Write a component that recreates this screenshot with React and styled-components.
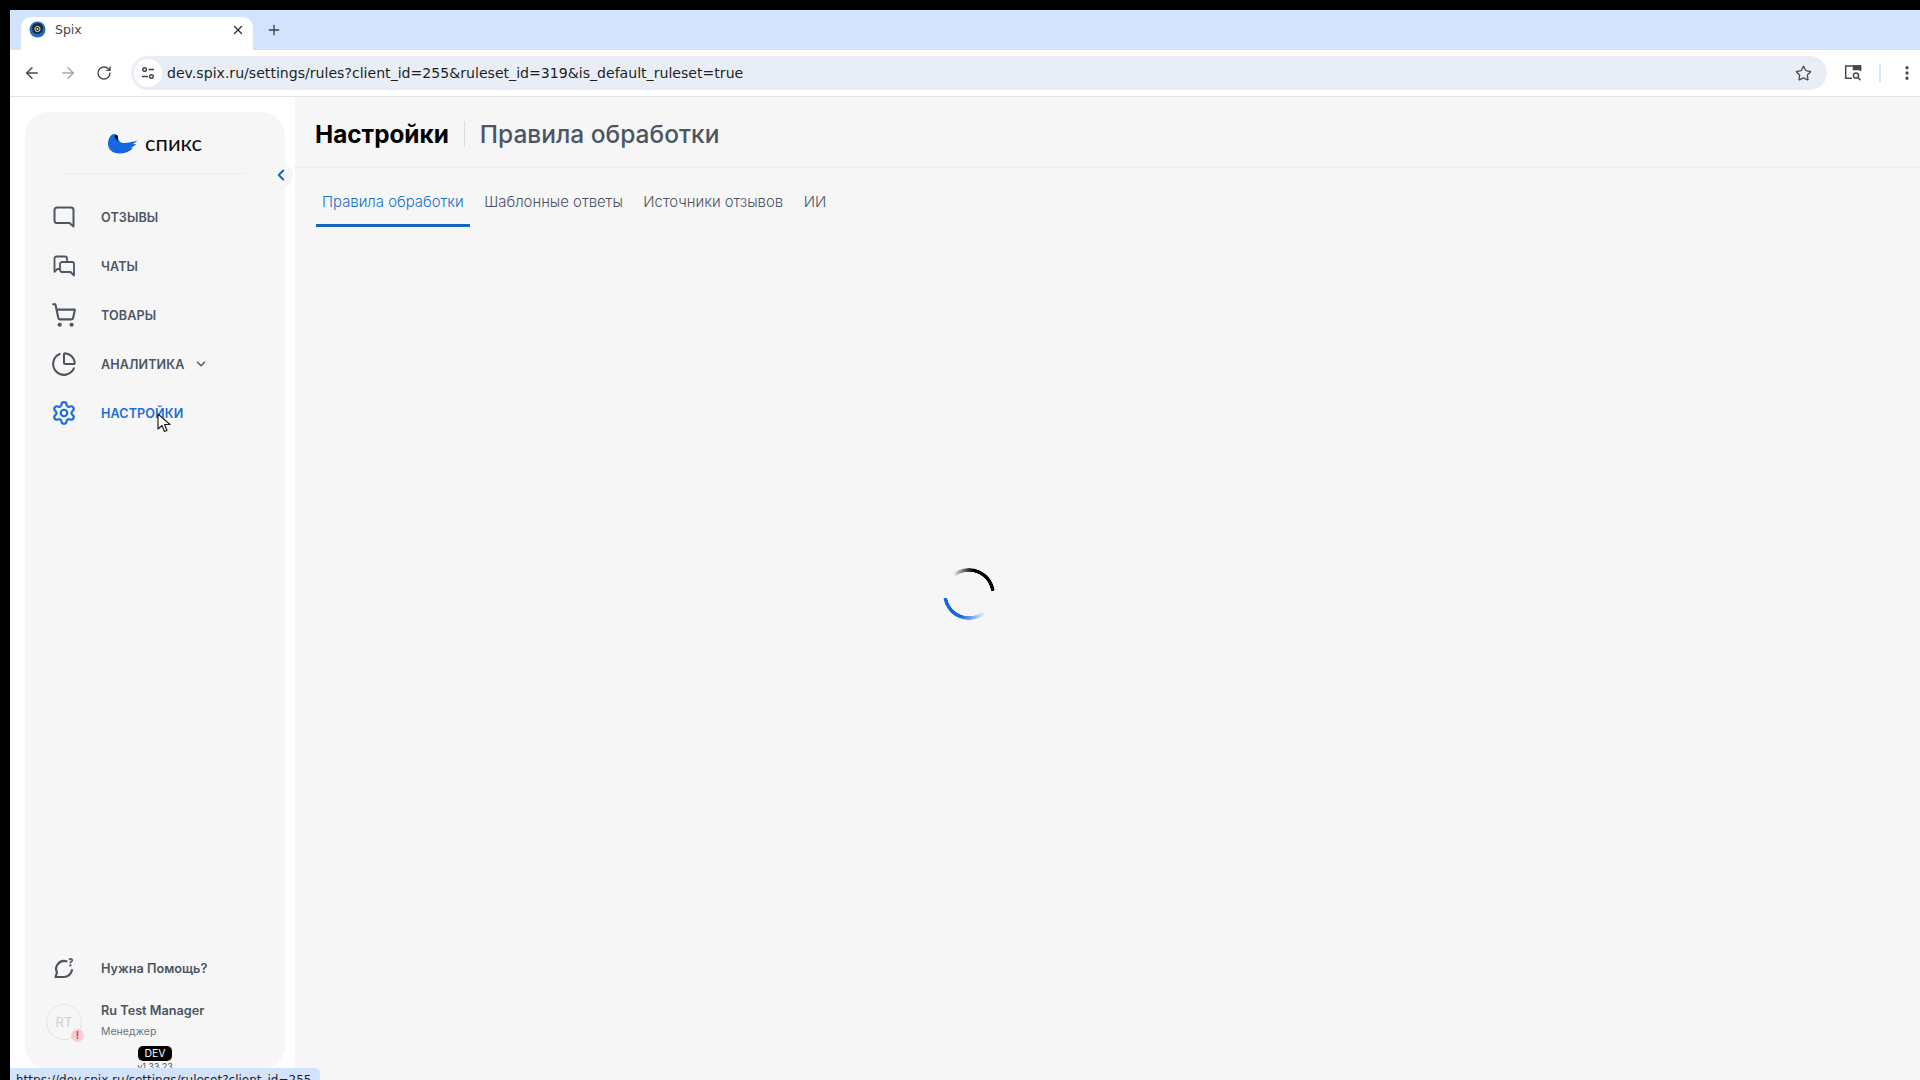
import React from 'react';
import styled, { createGlobalStyle } from 'styled-components';
import { ArrowLeft, ArrowRight, RotateCw, Star, Plus, X, ChevronLeft, ChevronDown, ShoppingCart, ChartPie, Settings, EllipsisVertical } from 'lucide-react';

const GlobalStyle = createGlobalStyle`
  html, body { margin: 0; padding: 0; height: 100%; background: #000; overflow: hidden; }
  #root { height: 100%; }
  * { box-sizing: border-box; }
`;

const Screen = styled.div`
  position: relative;
  width: 1920px;
  height: 1080px;
  padding: 10px 0 0 10px;
  background: #000;
  overflow: hidden;
  display: flex;
  flex-direction: column;
`;

const TabStrip = styled.div`
  height: 40px;
  flex: none;
  background: #d3e3fd;
  display: flex;
  align-items: flex-end;
  padding-left: 11px;
`;

const BrowserTab = styled.div`
  width: 232px;
  height: 33px;
  background: #fff;
  border-radius: 10px 10px 0 0;
  display: flex;
  align-items: center;
  padding: 0 8px 8px 8px;
  font: 12.5px "DejaVu Sans", sans-serif;
  color: #444746;
  gap: 9px;
`;

const TabTitle = styled.span`
  flex: 1;
`;

const NewTab = styled.div`
  width: 40px;
  height: 33px;
  margin-left: 1px;
  padding-bottom: 8px;
  display: flex;
  align-items: center;
  justify-content: center;
  color: #3c4043;
`;

const Toolbar = styled.div`
  height: 47px;
  flex: none;
  background: #fff;
  border-bottom: 1px solid #e1e3e6;
  display: flex;
  align-items: center;
  padding: 0 0 0 4px;
`;

const NavButton = styled.div`
  width: 36px;
  height: 30px;
  display: flex;
  align-items: center;
  justify-content: center;
  color: ${p => (p.$disabled ? '#a5a8ab' : '#474a4d')};
`;

const Omnibox = styled.div`
  flex: 1;
  height: 34px;
  margin-left: 9px;
  border-radius: 17px;
  background: #e9eef6;
  display: flex;
  align-items: center;
  padding: 0 15px 0 3px;
`;

const SiteInfo = styled.div`
  width: 28px;
  height: 28px;
  border-radius: 50%;
  background: #fff;
  display: flex;
  align-items: center;
  justify-content: center;
  margin-right: 5px;
`;

const Url = styled.div`
  flex: 1;
  font: 14.1px "DejaVu Sans", sans-serif;
  color: #1f1f1f;
  padding-bottom: 1px;
`;

const ToolIcon = styled.div`
  width: ${p => p.$w}px;
  display: flex;
  justify-content: center;
  color: #474a4d;
`;

const ToolbarSep = styled.div`
  width: 2px;
  height: 18px;
  margin-right: 13px;
  background: #d3e3fd;
`;

const Page = styled.div`
  flex: 1;
  min-height: 0;
  background: #fff;
  display: flex;
  position: relative;
`;

const Sidebar = styled.aside`
  width: 260px;
  margin: 15px 10px 11px 15px;
  background: #f6f6f7;
  border-radius: 24px;
  display: flex;
  flex-direction: column;
  position: relative;
  flex: none;
`;

const LogoRow = styled.div`
  height: 62px;
  margin: 0 40px;
  border-bottom: 1px solid #e9ebee;
  display: flex;
  align-items: flex-end;
  justify-content: center;
  padding-bottom: 19px;
  gap: 7px;
`;

const LogoText = styled.span`
  font: 400 22px/22px "Lato", sans-serif;
  color: #0b0b0b;
`;

const CollapseButton = styled.div`
  position: absolute;
  top: 51px;
  left: 244px;
  width: 24px;
  height: 24px;
  border-radius: 50%;
  background: #f6f6f7;
  display: flex;
  align-items: center;
  justify-content: center;
  color: #1565c0;
`;

const NavList = styled.nav`
  display: flex;
  flex-direction: column;
  gap: 9px;
  margin-top: 23px;
  flex: 1;
`;

const NavItem = styled.div`
  height: 40px;
  display: flex;
  align-items: center;
  padding-left: 24px;
  color: ${p => (p.$active ? '#1a6fd6' : '#4b5563')};
`;

const IconSlot = styled.div`
  width: 30px;
  height: 30px;
  display: flex;
  align-items: center;
  justify-content: center;
  margin-right: 22px;
  flex: none;
`;

const NavLabel = styled.span`
  font: 600 12.6px "Inter", sans-serif;
  letter-spacing: 0.1px;
  text-transform: uppercase;
`;

const NavChevron = styled(ChevronDown)`
  margin-left: 9px;
`;

const HelpRow = styled.div`
  display: flex;
  align-items: center;
  padding-left: 24px;
  height: 30px;
  color: #4b5563;
`;

const HelpLabel = styled.span`
  font: 600 12.7px "Inter", sans-serif;
`;

const UserRow = styled.div`
  display: flex;
  align-items: flex-start;
  padding-left: 21px;
  margin-top: 20px;
  height: 43px;
`;

const Avatar = styled.div`
  position: relative;
  width: 36px;
  height: 36px;
  border: 1px solid #e2e3e5;
  border-radius: 50%;
  margin: 1px 19px 0 0;
  display: flex;
  align-items: center;
  justify-content: center;
  font: 400 13px "Inter", sans-serif;
  color: #d0d2d5;
  flex: none;
`;

const AlertDot = styled.span`
  position: absolute;
  right: -3px;
  bottom: -3px;
  width: 13px;
  height: 13px;
  border-radius: 50%;
  background: #f8cdd8;
  color: #e0405e;
  font: 700 10px/13px "Inter", sans-serif;
  text-align: center;
`;

const UserInfo = styled.div`
  display: flex;
  flex-direction: column;
  gap: 6px;
`;

const UserName = styled.span`
  font: 600 12.7px/16px "Inter", sans-serif;
  color: #4b5563;
`;

const UserRole = styled.span`
  font: 400 10.5px/13px "Inter", sans-serif;
  color: #6b7280;
`;

const Versions = styled.div`
  display: flex;
  flex-direction: column;
  align-items: center;
  height: 23px;
`;

const DevBadge = styled.span`
  width: 34px;
  height: 15px;
  border-radius: 5px;
  background: #000;
  color: #fff;
  font: 400 10.5px/15px "Inter", sans-serif;
  text-align: center;
`;

const Version = styled.span`
  font: 400 9px/11px "Inter", sans-serif;
  color: #4b5563;
`;

const Main = styled.main`
  flex: 1;
  background: #f6f6f7;
  display: flex;
  flex-direction: column;
  min-width: 0;
`;

const Header = styled.header`
  height: 71px;
  border-bottom: 1px solid #eceef0;
  display: flex;
  align-items: center;
  padding: 3px 0 0 20px;
`;

const Title = styled.h1`
  margin: 0;
  font: 700 24.3px "Inter", sans-serif;
  color: #000;
`;

const HeaderSep = styled.div`
  width: 1px;
  height: 26px;
  background: #d9dbde;
  margin: 0 15px;
`;

const Subtitle = styled.h2`
  margin: 0;
  font: 500 24.5px "Inter", sans-serif;
  color: #4b5563;
`;

const Tabs = styled.div`
  display: flex;
  gap: 8.5px;
  padding: 0 0 0 21px;
`;

const TabItem = styled.div`
  height: 59px;
  padding: 11px 6px 0;
  display: flex;
  align-items: center;
  font: 300 14.9px "Inter", sans-serif;
  color: ${p => (p.$active ? '#1a6fc4' : '#4b5563')};
  border-bottom: 3px solid ${p => (p.$active ? '#1565c0' : 'transparent')};
`;

const SpinnerArea = styled.div`
  flex: 1;
  display: flex;
  align-items: center;
  justify-content: center;
  padding: 0 278px 120px 0;
`;

const Spinner = styled.div`
  width: 52px;
  height: 52px;
  border-radius: 50%;
  background: conic-gradient(from -40deg, transparent 0deg, #000 50deg, #000 122deg, transparent 122deg, transparent 180deg, #1467e0 240deg, #1467e0 300deg, transparent 300deg);
  mask: radial-gradient(closest-side, transparent calc(100% - 4px), #000 calc(100% - 3.5px));
`;

const StatusBubble = styled.div`
  position: absolute;
  left: 0;
  bottom: -8px;
  width: 310px;
  height: 20px;
  padding: 4px 0 0 6px;
  border-radius: 0 5px 0 0;
  background: #d3e3fd;
  font: 12px/16px "DejaVu Sans", sans-serif;
  color: #1f1f1f;
  white-space: nowrap;
  overflow: hidden;
`;

const Cursor = styled.svg`
  position: absolute;
  left: 157px;
  top: 413px;
`;

const Favicon = () => (
  <svg width="17" height="17" viewBox="0 0 17 17">
    <circle cx="8.5" cy="8.5" r="8" fill="#1a6fc4" />
    <circle cx="8.5" cy="7.5" r="5.5" fill="#1f2a33" />
    <circle cx="8.5" cy="8" r="2.6" fill="none" stroke="#e6e6e6" strokeWidth="1" />
    <circle cx="8.5" cy="8" r="0.9" fill="#e6e6e6" />
  </svg>
);

const TuneIcon = () => (
  <svg width="14" height="14" viewBox="0 0 14 14" fill="none" stroke="#3c4043" strokeWidth="1.4">
    <circle cx="3.6" cy="3.5" r="1.8" />
    <path d="M7.5 3.5H13M1 10.5h6" />
    <circle cx="10.4" cy="10.5" r="1.8" />
  </svg>
);

const SidePanelIcon = () => (
  <svg width="18" height="16" viewBox="0 0 18 16" fill="none" stroke="#474a4d" strokeWidth="1.5">
    <path d="M8 13.2H1.7V1h14.8v5" />
    <path d="M9.5 1h7v3.5h-7z" fill="#474a4d" />
    <circle cx="12" cy="10.5" r="2.6" />
    <path d="M14 12.6l2.6 2.6" />
  </svg>
);

const BirdLogo = () => (
  <svg width="30" height="20" viewBox="0 0 30 20">
    <path d="M6 0C8.500 0 9.800 1.500 10 3.500C10.300 6.500 11.500 8.300 14.500 9C19 9.500 24 7.500 29.500 6.700L25 10L28.500 10.300L23 14L25 14.500C21.500 17.500 16.500 19.500 11.500 19.500C4.500 19.500 0 15.500 0 9.800C0 5.500 2.500 0 6 0Z" fill="#1467e0" />
    <circle cx="8.300" cy="2.700" r="1.700" fill="#0b0b0b" />
    <path d="M7.600 3h2l.3 4.500C8.600 6.800 8 5 7.600 3z" fill="#0b0b0b" />
  </svg>
);

const ReviewsIcon = () => (
  <svg width="22" height="22" viewBox="0 0 22 22" fill="none" stroke="currentColor" strokeWidth="2" strokeLinejoin="round">
    <path d="M4 1.500h14a2.500 2.500 0 0 1 2.500 2.500v16.500l-4-3.500H4A2.500 2.500 0 0 1 1.500 14.500V4A2.500 2.500 0 0 1 4 1.500z" />
  </svg>
);

const ChatsIcon = () => (
  <svg width="22" height="22" viewBox="0 0 22 22" fill="none" stroke="currentColor" strokeWidth="1.800" strokeLinejoin="round">
    <path d="M7 14H4.500l-3 2.800V3.500a2 2 0 0 1 2-2h8.500a2 2 0 0 1 2 2V7" />
    <path d="M9 7h10a2 2 0 0 1 2 2v11.500L17.500 17H9a2 2 0 0 1-2-2V9a2 2 0 0 1 2-2z" />
  </svg>
);

const HelpIcon = () => (
  <svg width="22" height="22" viewBox="0 0 22 22" fill="none" stroke="currentColor" strokeWidth="2.200" strokeLinecap="round" strokeLinejoin="round">
    <path d="M13.500 4.300A8 8 0 0 0 4 15.500L2.500 20h8a8.300 8.300 0 0 0 8.500-7" />
    <path d="M16.500 2.300c1-.8 2.800-.3 2.800 1 0 1.300-1.700 1.300-1.900 2.500" strokeWidth="1.600" />
    <circle cx="17.400" cy="8.400" r=".5" strokeWidth="1.300" />
  </svg>
);

const navItems = [
  { label: 'Отзывы', icon: <ReviewsIcon /> },
  { label: 'Чаты', icon: <ChatsIcon /> },
  { label: 'Товары', icon: <ShoppingCart size={26} strokeWidth={1.9} /> },
  { label: 'Аналитика', icon: <ChartPie size={26} strokeWidth={1.9} />, hasMenu: true },
  { label: 'Настройки', icon: <Settings size={26} strokeWidth={2} />, active: true },
];

const tabs = ['Правила обработки', 'Шаблонные ответы', 'Источники отзывов', 'ИИ'];

export default function App() {
  return (
    <Screen>
      <GlobalStyle />
      <TabStrip>
        <BrowserTab>
          <Favicon />
          <TabTitle>Spix</TabTitle>
          <X size={14} strokeWidth={2.2} color="#2b2b2b" />
        </BrowserTab>
        <NewTab><Plus size={16} strokeWidth={2} /></NewTab>
      </TabStrip>
      <Toolbar>
        <NavButton><ArrowLeft size={18} strokeWidth={2} /></NavButton>
        <NavButton $disabled><ArrowRight size={18} strokeWidth={2} /></NavButton>
        <NavButton><RotateCw size={16} strokeWidth={2} /></NavButton>
        <Omnibox>
          <SiteInfo><TuneIcon /></SiteInfo>
          <Url>dev.spix.ru/settings/rules?client_id=255&amp;ruleset_id=319&amp;is_default_ruleset=true</Url>
          <Star size={17} strokeWidth={1.8} color="#474a4d" />
        </Omnibox>
        <ToolIcon $w={52}><SidePanelIcon /></ToolIcon>
        <ToolbarSep />
        <ToolIcon $w={26}><EllipsisVertical size={18} strokeWidth={2.4} /></ToolIcon>
      </Toolbar>
      <Page>
        <Sidebar>
          <LogoRow>
            <BirdLogo />
            <LogoText>спикс</LogoText>
          </LogoRow>
          <CollapseButton><ChevronLeft size={18} strokeWidth={2.6} /></CollapseButton>
          <NavList>
            {navItems.map(item => (
              <NavItem key={item.label} $active={item.active}>
                <IconSlot>{item.icon}</IconSlot>
                <NavLabel>{item.label}</NavLabel>
                {item.hasMenu && <NavChevron size={14} strokeWidth={2.4} />}
              </NavItem>
            ))}
          </NavList>
          <HelpRow>
            <IconSlot><HelpIcon /></IconSlot>
            <HelpLabel>Нужна Помощь?</HelpLabel>
          </HelpRow>
          <UserRow>
            <Avatar>RT<AlertDot>!</AlertDot></Avatar>
            <UserInfo>
              <UserName>Ru Test Manager</UserName>
              <UserRole>Менеджер</UserRole>
            </UserInfo>
          </UserRow>
          <Versions>
            <DevBadge>DEV</DevBadge>
            <Version>v1.33.23</Version>
          </Versions>
        </Sidebar>
        <Main>
          <Header>
            <Title>Настройки</Title>
            <HeaderSep />
            <Subtitle>Правила обработки</Subtitle>
          </Header>
          <Tabs>
            {tabs.map((tab, i) => (
              <TabItem key={tab} $active={i === 0}>{tab}</TabItem>
            ))}
          </Tabs>
          <SpinnerArea><Spinner /></SpinnerArea>
        </Main>
        <StatusBubble>https://dev.spix.ru/settings/ruleset?client_id=255</StatusBubble>
      </Page>
      <Cursor width="16" height="20" viewBox="0 0 16 20">
        <path d="M1 1v15l4-3.500 2.500 6 2.500-1-2.500-6h5.500z" fill="#fff" stroke="#222" strokeWidth="1.200" strokeLinejoin="round" />
      </Cursor>
    </Screen>
  );
}
